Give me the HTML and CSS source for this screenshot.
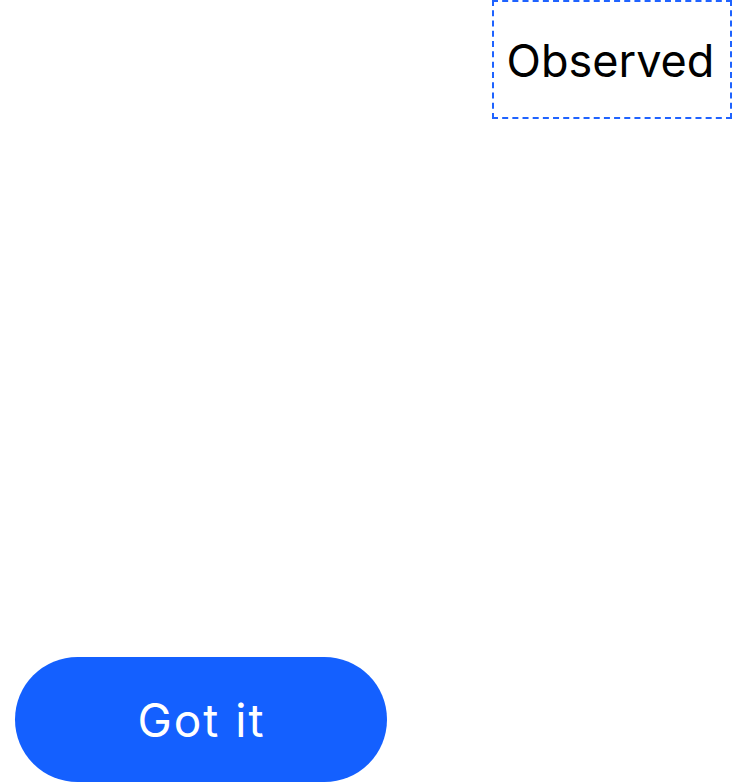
FILE: index.html
```html
<!DOCTYPE html>
<html>
<head>
<meta charset="utf-8">
<link rel="stylesheet" href="styles.css">
</head>
<body>
<div class="page">
  <div class="top">
    <div class="observed">Observed</div>
  </div>
  <div class="bottom">
    <button class="got-it">Got it</button>
  </div>
</div>
</body>
</html>
```
FILE: styles.css
```css
html, body {
  margin: 0;
  padding: 0;
  background: #ffffff;
}
.page {
  width: 732px;
  height: 783px;
  display: flex;
  flex-direction: column;
  justify-content: space-between;
  font-family: Inter, "Noto Sans", sans-serif;
}
.top {
  display: flex;
  justify-content: flex-end;
}
.observed {
  box-sizing: border-box;
  width: 240px;
  height: 119px;
  border: 2px dashed #1f63ff;
  display: flex;
  align-items: center;
  justify-content: center;
  font-size: 45px;
  color: #000000;
  padding-top: 1px;
  padding-right: 3px;
}
.bottom {
  display: flex;
  padding: 0 0 1px 15px;
}
.got-it {
  width: 372px;
  height: 125px;
  border: none;
  border-radius: 63px;
  background: #1460ff;
  color: #ffffff;
  font-family: Inter, "Noto Sans", sans-serif;
  font-size: 46px;
  letter-spacing: 2px;
  padding: 0 0 0 1px;
}
```
